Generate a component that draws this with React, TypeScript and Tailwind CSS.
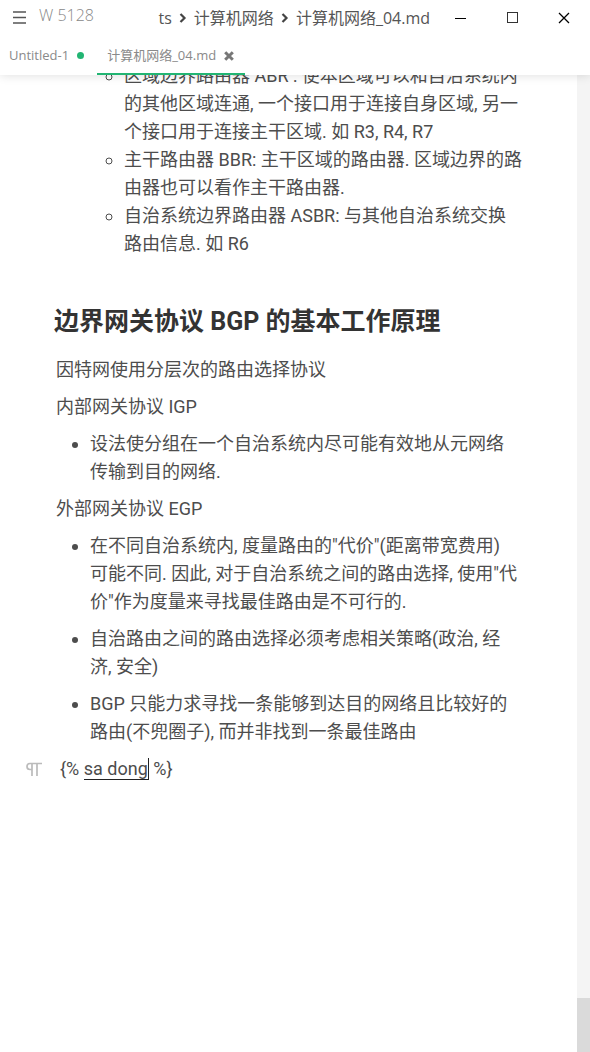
import { ReactNode } from "react";

function Chevron() {
  return (
    <svg viewBox="0 0 8 10" className="h-[10px] w-2 shrink-0" fill="none" stroke="#444" strokeWidth="2.2" aria-hidden="true">
      <path d="M1.5 1 L5.5 5 L1.5 9" />
    </svg>
  );
}

function TitleBar() {
  return (
    <div className="flex h-9 items-center">
      <button aria-label="Menu" className="ml-3 flex h-8 w-4 items-center">
        <svg viewBox="0 0 14 14" className="size-[14px]" stroke="#555" strokeWidth="1.6" aria-hidden="true">
          <path d="M1 1H14M1 6.5H14M1 12H14" />
        </svg>
      </button>
      <span className="ml-[11px] pb-[6px] text-base font-light text-[#888]">W 5128</span>
      <nav aria-label="Path" className="ml-auto flex items-center gap-[7px] text-base text-[#555]">
        <a href="#ts">ts</a>
        <Chevron />
        <a href="#folder">计算机网络</a>
        <Chevron />
        <a href="#file">计算机网络_04.md</a>
      </nav>
      <div className="ml-1 flex">
        <button aria-label="Minimize" className="flex h-8 w-[52px] items-center justify-center">
          <svg viewBox="0 0 12 12" className="size-3" stroke="#000" aria-hidden="true"><path d="M1 6.5H12" /></svg>
        </button>
        <button aria-label="Maximize" className="flex h-8 w-[52px] items-center justify-center">
          <svg viewBox="0 0 12 12" className="size-3" stroke="#333" fill="none" aria-hidden="true"><rect x="1.5" y="0.5" width="10" height="10" /></svg>
        </button>
        <button aria-label="Close" className="flex h-8 w-[52px] items-center justify-center">
          <svg viewBox="0 0 12 12" className="size-3" stroke="#000" strokeWidth="1.3" aria-hidden="true"><path d="M1 1L11 11M11 1L1 11" /></svg>
        </button>
      </div>
    </div>
  );
}

function Tabs() {
  return (
    <div role="tablist" className="flex h-[39px] text-[13px] text-[#8a8a8a]">
      <button role="tab" aria-selected="false" className="flex items-center gap-2 pr-[13px] pl-[9px]">
        Untitled-1
        <span className="size-[7px] rounded-full bg-[#22b573]" />
      </button>
      <button role="tab" aria-selected="true" className="flex w-[148px] items-center gap-2 border-b-2 border-[#22b573] pt-[2px] pl-[10px]">
        计算机网络_04.md
        <svg viewBox="0 0 10 10" className="size-[10px]" stroke="#777" strokeWidth="3" aria-hidden="true"><path d="M1.2 1.2L8.8 8.8M8.8 1.2L1.2 8.8" /></svg>
      </button>
    </div>
  );
}

function Bullets({ items }: { items: ReactNode[] }) {
  return (
    <ul className="my-[9px] list-disc space-y-[9px] pl-[34px]">
      {items.map((item, i) => (
        <li key={i}>{item}</li>
      ))}
    </ul>
  );
}

export default function App() {
  return (
    <div className="flex h-screen flex-col overflow-hidden bg-white">
      <header className="relative z-10 bg-white font-['Open_Sans','Noto_Sans_CJK_SC',sans-serif] shadow-[0_0_10px_rgba(0,0,0,0.14)]">
        <TitleBar />
        <Tabs />
      </header>
      <div className="flex min-h-0 flex-1">
        <main className="min-w-0 flex-1 overflow-hidden px-14 font-['Roboto','Noto_Sans_CJK_SC',sans-serif] text-[18px] leading-7 text-[#4d4d4d]">
          <ul className="-mt-[13px] -mr-[2px] list-[circle] pl-[68px]">
            <li>区域边界路由器 ABR : 使本区域可以和自治系统内的其他区域连通, 一个接口用于连接自身区域, 另一个接口用于连接主干区域. 如 R3, R4, R7</li>
            <li>主干路由器 BBR: 主干区域的路由器. 区域边界的路由器也可以看作主干路由器.</li>
            <li>自治系统边界路由器 ASBR: 与其他自治系统交换路由信息. 如 R6</li>
          </ul>
          <h2 className="-ml-[2px] mt-[46px] mb-4 text-[25px] leading-9 font-bold text-[#333]">边界网关协议 BGP 的基本工作原理</h2>
          <p>因特网使用分层次的路由选择协议</p>
          <p className="mt-[9px]">内部网关协议 IGP</p>
          <Bullets items={["设法使分组在一个自治系统内尽可能有效地从元网络传输到目的网络."]} />
          <p>外部网关协议 EGP</p>
          <Bullets
            items={[
              <>
                在不同自治系统内, 度量路由的"代价"(距离带宽费用)
                <br />
                可能不同. 因此, 对于自治系统之间的路由选择, 使用"代价"作为度量来寻找最佳路由是不可行的.
              </>,
              "自治路由之间的路由选择必须考虑相关策略(政治, 经济, 安全)",
              "BGP 只能力求寻找一条能够到达目的网络且比较好的路由(不兜圈子), 而并非找到一条最佳路由",
            ]}
          />
          <div className="-ml-[31px] flex items-center">
            <svg viewBox="0 0 18 16" className="h-4 w-[18px]" fill="none" stroke="#bbb" strokeWidth="1.7" aria-hidden="true">
              <path d="M17 2.5H5a3 3 0 0 0 0 6H7M7 2.5V15M12 2.5V15" />
            </svg>
            <p className="ml-[17px]">
              {"{% "}
              <span className="border-r border-b border-[#222]">sa dong</span>
              {" %}"}
            </p>
          </div>
        </main>
        <div className="flex w-[13px] flex-col justify-end bg-[#f4f4f4]">
          <div className="h-[54px] bg-[#dadada]" />
        </div>
      </div>
    </div>
  );
}
